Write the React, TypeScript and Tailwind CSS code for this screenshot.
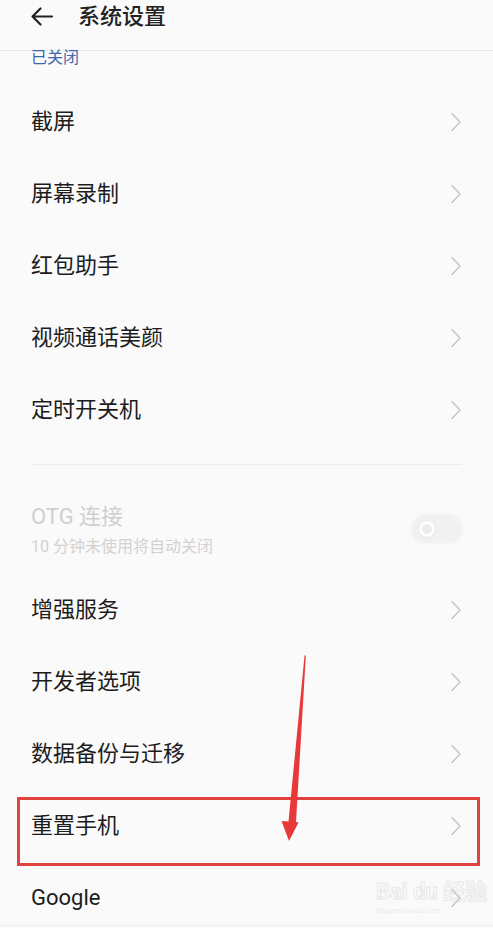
import React from "react";

const Chevron = () => (
  <svg width="10" height="20" viewBox="0 0 10 20" fill="none">
    <path d="M1 1.5 L9 10 L1 18.5" stroke="#c8c8c8" strokeWidth="1.6" strokeLinecap="round" strokeLinejoin="round" />
  </svg>
);

const Row = ({ label }: { label: string }) => (
  <div className="h-[72px] flex items-center justify-between pl-[31px] pr-[32px]">
    <span className="text-[22px] leading-[28px] text-[#1c1c1c]">{label}</span>
    <Chevron />
  </div>
);

export default function App() {
  return (
    <div className="relative w-[493px] h-[928px] overflow-hidden bg-[#fafafa] font-['Roboto','Noto_Sans_CJK_SC',sans-serif]">
      {/* header */}
      <div className="h-[51px] border-b border-[#e6e6e6] flex items-start pt-[5px] pl-[30px]">
        <svg width="24" height="24" viewBox="0 0 24 24" fill="none">
          <path d="M22 11.5 H2.5 M10.5 3.5 L2.5 11.5 L10.5 19.5" stroke="#222" strokeWidth="2.2" strokeLinecap="round" strokeLinejoin="round" />
        </svg>
        <span className="ml-[24px] text-[22px] leading-[24px] text-[#222] font-medium">系统设置</span>
      </div>

      <div className="pl-[31px] h-[16px] text-[16px] leading-[16px] text-[#3e66ad] mt-[-1px]">已关闭</div>

      <div className="mt-[20px]">
        <Row label="截屏" />
        <Row label="屏幕录制" />
        <Row label="红包助手" />
        <Row label="视频通话美颜" />
        <Row label="定时开关机" />
      </div>

      <div className="mt-[18px] mx-[31px] h-px bg-[#ececec]" />

      <div className="flex items-start justify-between pl-[31px] pr-[31px] pt-[38px] pb-[17px]">
        <div className="flex flex-col">
          <span className="text-[22px] leading-[28px] text-[#cfcfcf]">OTG 连接</span>
          <span className="mt-[6px] text-[16px] leading-[20px] text-[#d2d2d2]">10 分钟未使用将自动关闭</span>
        </div>
        <div className="mt-[12px] w-[50px] h-[28px] rounded-full bg-[#f1f1f1] shadow-[0_0_4px_rgba(0,0,0,0.05)] flex items-center pl-[7px]">
          <div className="w-[16px] h-[16px] rounded-full border-[3px] border-white bg-[#ececec] shadow-[0_0_2px_rgba(0,0,0,0.12)]" />
        </div>
      </div>

      <div>
        <Row label="增强服务" />
        <Row label="开发者选项" />
        <Row label="数据备份与迁移" />
        <Row label="重置手机" />
        <Row label="Google" />
      </div>

      <div className="absolute left-0 right-0 top-[925px] h-px bg-[#ececec]" />

      {/* watermark */}
      <div className="absolute left-[376px] top-[880px] flex flex-col items-start opacity-40 pointer-events-none">
        <span className="text-[22px] leading-[24px] font-bold text-transparent [-webkit-text-stroke:1px_#d0d0d0]">Bai du 经验</span>
        <span className="text-[8px] leading-[10px] text-[#d6d6d6] mt-[2px]">jingyan.baidu.com</span>
      </div>

      {/* red annotation box */}
      <div className="absolute left-[17px] top-[797px] w-[463px] h-[69px] border-[3px] border-[#e0423f]" />

      {/* red arrow */}
      <svg className="absolute left-0 top-0 pointer-events-none" width="493" height="928" viewBox="0 0 493 928">
        <polygon
          points="304.6,655 305.8,656 296,822 298.5,822.5 289,841 281.5,821 288.5,821.5"
          fill="#e8383a"
        />
      </svg>
    </div>
  );
}
